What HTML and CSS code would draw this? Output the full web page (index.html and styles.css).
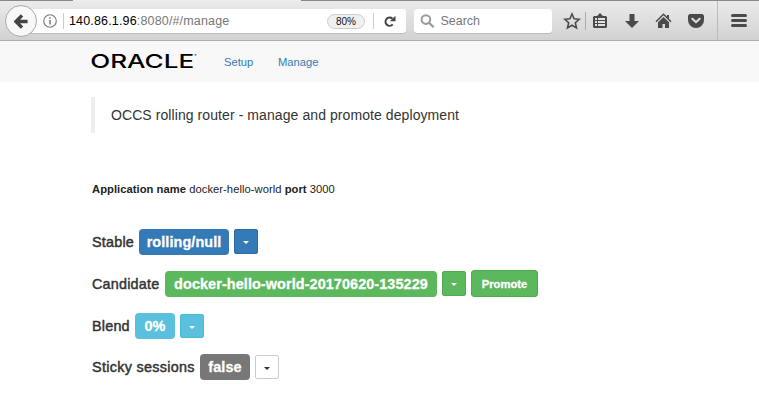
FILE: index.html
```html
<!DOCTYPE html>
<html lang="en">
<head>
<meta charset="utf-8">
<title>OCCS rolling router</title>
<link rel="stylesheet" href="styles.css">
</head>
<body>
<div class="toolbar">
  <div class="tab-edge"></div>
  <div class="address">
    <svg class="info" width="14" height="14" viewBox="0 0 14 14"><circle cx="7" cy="7" r="6.3" fill="none" stroke="#777" stroke-width="1.1"/><path d="M7 6v4.5M7 3.3v1.5" stroke="#777" stroke-width="1.5"/></svg>
    <span class="rule"></span>
    <span class="url"><b>140.86.1.96</b>:8080/#/manage</span>
    <span class="zoom">80%</span>
    <span class="rule reload-rule"></span>
    <svg class="reload" width="12" height="13" viewBox="0 0 12 13"><path d="M8.7 9.4A4.1 4.1 0 1 1 8.4 3.6" fill="none" stroke="#444" stroke-width="2.1"/><path d="M11.5.7v5.6H5.9z" fill="#444"/></svg>
  </div>
  <div class="back"><svg width="14" height="15" viewBox="0 0 14 15"><path d="M8 1.4 2 7.5l6 6.1M2.2 7.5h11.4" fill="none" stroke="#444" stroke-width="3.4"/></svg></div>
  <div class="search">
    <svg width="15" height="15" viewBox="0 0 15 15"><circle cx="5.9" cy="5.6" r="4.3" fill="none" stroke="#999" stroke-width="2"/><path d="m9 8.7 4.7 4.6" stroke="#999" stroke-width="2.3"/></svg>
    <span>Search</span>
  </div>
  <div class="tools">
    <svg class="star" width="18" height="18" viewBox="0 0 18 18"><path d="m9 2 2.1 4.800 5.100.5-3.900 3.400 1.200 5.200L9 13.200l-4.500 2.700 1.200-5.200-3.900-3.400 5.100-.5z" fill="none" stroke="#4a4a4a" stroke-width="1.6"/></svg>
    <span class="tool-rule"></span>
    <svg width="16" height="18" viewBox="0 0 16 18"><path d="M2 4h3l3-3 3 3h3l1 1v10l-1 1H2l-1-1V5z" fill="#4a4a4a"/><path d="M3 6h2v2H3zm3 0h7v2H6zM3 9h2v2H3zm3 0h7v2H6zm-3 3h2v2H3zm3 0h7v2H6z" fill="#e2e2e2"/></svg>
    <svg class="download" width="16" height="18" viewBox="0 0 16 18"><path d="M5.500 2h5v7H15l-7 7-7-7h4.500z" fill="#4a4a4a"/></svg>
    <svg class="home" width="17" height="18" viewBox="0 0 17 18"><path d="m1 9.700 7.500-7.400L16 9.700" fill="none" stroke="#4a4a4a" stroke-width="1.500"/><path d="M3 10.200 8.500 5l5.500 5.200V16h-4v-4H7.500v4H3zM12 3h2v4l-2-2z" fill="#4a4a4a"/></svg>
    <svg class="pocket" width="16" height="18" viewBox="0 0 16 18"><path d="M1.500 2h13L16 3.500V8a8 8 0 0 1-16 0V3.500z" fill="#4a4a4a"/><path d="M4.300 6.700 8 10.200l3.700-3.500" fill="none" stroke="#e2e2e2" stroke-width="2" stroke-linecap="round"/></svg>
  </div>
  <div class="menu"><i></i><i></i><i></i></div>
</div>
<nav class="navbar">
  <svg class="logo" width="108" height="18" viewBox="0 0 108 18" role="img" aria-label="ORACLE"><text x="-.8" y="14.800" textLength="104" lengthAdjust="spacingAndGlyphs">ORACLE</text><circle cx="104.500" cy="1.700" r="1" fill="#777"/></svg>
  <a class="setup">Setup</a><a class="manage">Manage</a>
</nav>
<main>
  <blockquote>OCCS rolling router - manage and promote deployment</blockquote>
  <p class="app"><b>Application name</b> docker-hello-world <b>port</b> 3000</p>
  <div class="row"><span class="name w-stable">Stable</span><span class="badge primary b-stable">rolling/null</span><span class="drop primary"></span></div>
  <div class="row"><span class="name w-candidate">Candidate</span><span class="badge success b-candidate">docker-hello-world-20170620-135229</span><span class="drop success"></span><span class="promote success">Promote</span></div>
  <div class="row blend"><span class="name w-blend">Blend</span><span class="badge info-bg b-blend">0%</span><span class="drop info-bg short"></span></div>
  <div class="row"><span class="name w-sticky">Sticky sessions</span><span class="badge neutral b-sticky">false</span><span class="drop plain short"></span></div>
</main>
</body>
</html>
```
FILE: styles.css
```css
* { box-sizing: border-box; }
body { margin: 0; width: 759px; height: 404px; overflow: hidden; background: #fff; color: #333; font-family: "Liberation Sans", Arial, sans-serif; }
svg { display: block; flex: none; }
.toolbar { position: relative; display: flex; height: 41px; border-bottom: 1px solid #aeaeae; background: linear-gradient(#ebebeb, #d2d2d2); }
.tab-edge { position: absolute; top: 0; left: 0; width: 759px; height: 1px; background: linear-gradient(90deg, #888 73px, #eee 73px, #eee 301px, #888 301px); }
.address { display: flex; align-items: center; width: 387px; height: 24px; margin: 9px 0 0 20px; padding-left: 23px; background: #fff; border-radius: 0 3px 3px 0; box-shadow: 0 1px 0 #bbb; }
.rule { width: 1px; height: 16px; margin: 0 5px 0 6px; background: #ccc; }
.url { width: 258px; font-size: 12.500px; letter-spacing: .16px; color: #777; white-space: nowrap; }
.url b { color: #000; font-weight: 400; }
.zoom { width: 38px; height: 15px; border: 1px solid #ccc; border-radius: 8px; background: #f0f0f0; color: #111; font-size: 10px; line-height: 13px; text-align: center; }
.reload-rule { margin: 0 10px 0 8px; }
.back { position: absolute; left: 5px; top: 5px; display: flex; align-items: center; justify-content: center; width: 32px; height: 32px; border: 1px solid #aaa; border-radius: 50%; background: #f8f8f8; }
.search { display: flex; align-items: center; width: 138px; height: 24px; margin: 9px 0 0 8px; padding-left: 6px; gap: 5px; background: #fff; border-radius: 3px; box-shadow: 0 1px 0 #bbb; color: #777; font-size: 12.500px; }
.tools { display: flex; align-items: center; width: 165px; height: 40px; padding: 2px 0 0 11px; }
.tool-rule { width: 1px; height: 18px; margin: 0 6px 0 4px; background: #aaa; }
.download { margin-left: 16px; }
.home { margin-left: 15px; }
.pocket { margin-left: 16px; }
.menu { width: 42px; height: 39px; margin-top: 1px; padding: 13px 0 0 13px; border-left: 1px solid #bbb; }
.menu i { display: block; width: 16px; height: 3px; margin-bottom: 2px; border-radius: 2px; background: #4a4a4a; }
.navbar { display: flex; align-items: center; height: 41px; padding-left: 91px; background: #f8f8f8; color: #337ab7; font-size: 11.200px; }
.logo { overflow: visible; }
.logo text { font: 500 19.300px Inter, sans-serif; fill: #000; }
.setup { width: 54px; margin-left: 25px; }
main { padding: 15px 0 0 91px; }
blockquote { height: 36px; margin: 0; padding-left: 16px; border-left: 4px solid #eee; font-size: 14px; line-height: 36px; letter-spacing: .08px; white-space: nowrap; }
.app { height: 16px; margin: 48px 0 32px; padding-left: 1px; color: #222; font-size: 11.200px; line-height: 16px; letter-spacing: .05px; }
.row { display: flex; align-items: flex-start; height: 42px; white-space: nowrap; }
.name { padding-left: 1px; line-height: 26px; font-size: 14.400px; letter-spacing: .2px; -webkit-text-stroke: .45px #333; }
.badge { height: 26px; border-radius: 4px; color: #fff; font-size: 14.400px; font-weight: 700; line-height: 26px; letter-spacing: .1px; text-align: center; -webkit-text-stroke: .3px #fff; }
.drop { display: flex; align-items: center; justify-content: center; width: 24px; height: 25px; margin-left: 5px; border: 1px solid; border-radius: 2px; color: #fff; }
.drop::after { content: ""; margin-top: 2px; border: 3px solid transparent; border-top-color: #fff; border-bottom: 0; }
.short { height: 24px; margin-top: 1px; }
.primary { background: #337ab7; border-color: #2e6da4; }
.success { background: #5cb85c; border-color: #4cae4c; }
.info-bg { background: #5bc0de; border-color: #46b8da; }
.neutral { background: #777; }
.plain { background: #fff; border-color: #ccc; }
.plain::after { border-top-color: #333; }
.promote { width: 67px; height: 27px; margin: -1px 0 0 5px; border-width: 1px; border-style: solid; border-radius: 3px; color: #fff; font-size: 11.200px; font-weight: 700; line-height: 26px; text-align: center; -webkit-text-stroke: .3px #fff; }
.blend { height: 41px; }
.w-stable { width: 48px; } .b-stable { width: 90px; }
.w-candidate { width: 74px; } .b-candidate { width: 272px; }
.w-blend { width: 44px; } .b-blend { width: 40px; }
.w-sticky { width: 109px; letter-spacing: .3px; } .b-sticky { width: 50px; }
```
